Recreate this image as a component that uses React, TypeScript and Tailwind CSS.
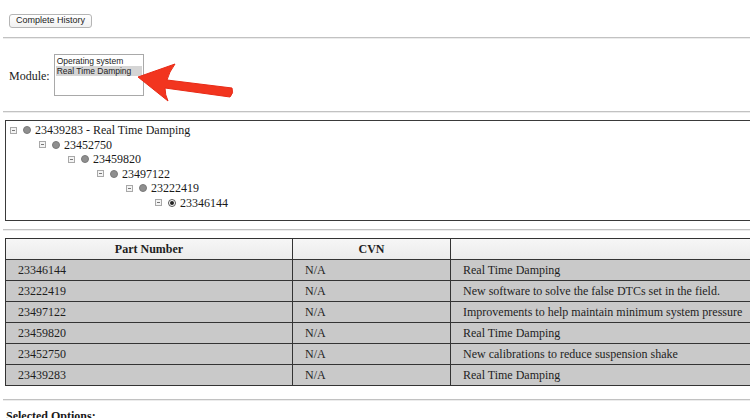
import React from 'react';

const TREE = [
  { id: '23439283', label: '23439283 - Real Time Damping' },
  { id: '23452750', label: '23452750' },
  { id: '23459820', label: '23459820' },
  { id: '23497122', label: '23497122' },
  { id: '23222419', label: '23222419' },
  { id: '23346144', label: '23346144', current: true },
];

const ROWS = [
  { part: '23346144', cvn: 'N/A', desc: 'Real Time Damping' },
  { part: '23222419', cvn: 'N/A', desc: 'New software to solve the false DTCs set in the field.' },
  { part: '23497122', cvn: 'N/A', desc: 'Improvements to help maintain minimum system pressure' },
  { part: '23459820', cvn: 'N/A', desc: 'Real Time Damping' },
  { part: '23452750', cvn: 'N/A', desc: 'New calibrations to reduce suspension shake' },
  { part: '23439283', cvn: 'N/A', desc: 'Real Time Damping' },
];

const Rule: React.FC = () => (
  <div className="ml-[3px] h-[2px] border-t border-t-[#c2c2c2] border-b border-b-[#ececec]" />
);

const Minus: React.FC = () => (
  <span className="w-[7px] h-[7px] border border-[#a8a8a8] bg-[#f4f4f4] flex items-center justify-center shrink-0">
    <span className="w-[3px] h-px bg-[#777]" />
  </span>
);

const Dot: React.FC<{ current?: boolean }> = ({ current }) =>
  current ? (
    <span className="w-[8px] h-[8px] rounded-full border border-[#555] bg-white flex items-center justify-center shrink-0">
      <span className="w-[4px] h-[4px] rounded-full bg-[#222]" />
    </span>
  ) : (
    <span className="w-[8px] h-[8px] rounded-full bg-[#8f8f8f] border border-[#7a7a7a] shrink-0" />
  );

export default function App() {
  return (
    <div
      className="relative w-[750px] h-[418px] overflow-hidden bg-white text-[#1a1a1a]"
      style={{ fontFamily: '"Liberation Serif", "Times New Roman", serif' }}
    >
      <div className="w-[820px]">
        {/* top button */}
        <div className="h-[37px] pt-[6px] pl-[9px]">
          <button
            type="button"
            className="h-[14px] px-[6px] rounded-[3px] border border-[#b5b5b5] bg-gradient-to-b from-white to-[#f1f1f1] text-[9px] leading-none text-[#222]"
            style={{ fontFamily: '"Liberation Sans", Arial, sans-serif' }}
          >
            Complete History
          </button>
        </div>
        <Rule />

        {/* module picker */}
        <div className="h-[72px] flex items-center pl-[9px] gap-[4px]">
          <span className="text-[12px] mt-[2px]">Module:</span>
          <div
            className="w-[90px] h-[42px] border border-[#a9a9a9] bg-white pt-px px-px text-[8.5px] leading-[10px] text-[#222]"
            style={{ fontFamily: '"Liberation Sans", Arial, sans-serif' }}
          >
            <div className="pl-[1px]">Operating system</div>
            <div className="pl-[1px] bg-[#d5d5d5]">Real Time Damping</div>
          </div>
        </div>
        <Rule />

        {/* tree */}
        <div className="mt-[7px] ml-[5px] h-[101px] border border-[#3a3a3a] pt-[2px] pl-[4px] text-[12px] leading-[14.5px]">
          {TREE.map((n, i) => (
            <div key={n.id} className="flex items-center h-[14.5px]" style={{ paddingLeft: i * 29 }}>
              <Minus />
              <span className="w-[6px]" />
              <Dot current={n.current} />
              <span className="ml-[4px]">{n.label}</span>
            </div>
          ))}
        </div>

        <div className="mt-[8px]">
          <Rule />
        </div>

        {/* parts table */}
        <table className="mt-[7px] ml-[5px] w-[800px] border-collapse text-[12px] leading-none text-[#1e1e1e]">
          <thead>
            <tr className="h-[21px] bg-gradient-to-b from-[#f6f6f6] to-[#ebebeb]">
              <th className="w-[287px] border border-[#333] font-bold text-center">Part Number</th>
              <th className="w-[158px] border border-[#333] font-bold text-center">CVN</th>
              <th className="border border-[#333]" />
            </tr>
          </thead>
          <tbody>
            {ROWS.map((r) => (
              <tr key={r.part} className="h-[21px] bg-[#c9c9c9]">
                <td className="border border-[#333] pl-[12px]">{r.part}</td>
                <td className="border border-[#333] pl-[12px]">{r.cvn}</td>
                <td className="border border-[#333] pl-[12px]">{r.desc}</td>
              </tr>
            ))}
          </tbody>
        </table>

        <div className="mt-[13px]">
          <Rule />
        </div>
        <div className="pl-[6px] pt-[6px] text-[12px] font-bold">Selected Options:</div>
      </div>

      {/* annotation arrow */}
      <svg className="absolute left-0 top-0 pointer-events-none" width="750" height="418">
        <path
          d="M138 77 L175 64 Q169 72 167 80 L232 88 Q234 93 230 97 L165 88 Q165 95 168 101 Z"
          fill="#f2351f"
          stroke="#e82a16"
          strokeWidth="1"
          strokeLinejoin="round"
        />
      </svg>
    </div>
  );
}
